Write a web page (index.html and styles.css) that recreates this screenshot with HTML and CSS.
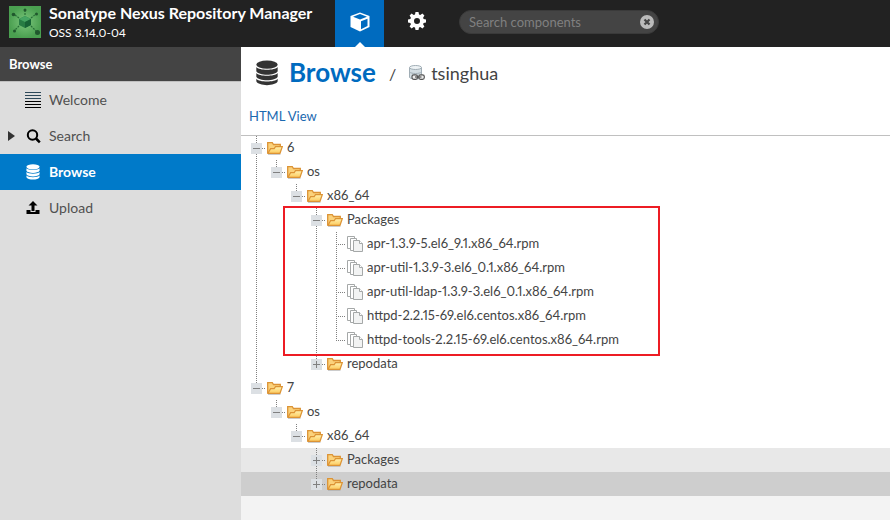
FILE: index.html
```
<!DOCTYPE html>
<html lang="en">
<head>
<meta charset="utf-8">
<title>Browse - Sonatype Nexus Repository Manager</title>
<link rel="stylesheet" href="styles.css">
</head>
<body>
<svg class="defs" aria-hidden="true">
  <defs>
    <linearGradient id="gold" x1="0" y1="0" x2="0" y2="1"><stop offset="0" stop-color="#fff3b0"/><stop offset="1" stop-color="#fdc95c"/></linearGradient>
    <radialGradient id="green"><stop offset="0" stop-color="#7cc67c"/><stop offset="1" stop-color="#4a9f50"/></radialGradient>
    <symbol id="folder" viewBox="0 0 16 16">
      <path d="M1 14.5h12.5" stroke="#aaa" stroke-opacity=".6"/>
      <path d="M.7 13V2.7h4.6l1.2 1.8h6.8v2.3" fill="#fbd27b" stroke="#dc9335" stroke-width="1.3"/>
      <path d="M1 13.3 3.6 8.6h3.6l1.3-1.9h6.8L13 13.3z" fill="url(#gold)" stroke="#dc9335" stroke-width="1.2"/>
    </symbol>
    <symbol id="files" viewBox="0 0 16 16">
      <path d="M.5 12.5V.5h7v2M3.5 14.5v-12M.5 12.5h3M3.5 2.5h6v2M3.5 14.5h3" fill="none" stroke="#a5a8a8"/>
      <path d="M6.5 4.5h6l3 3v8h-9z" fill="#f2f3f3" stroke="#a5a8a8"/>
      <path d="M12.5 4.5v3h3" fill="#fff" stroke="#a5a8a8"/>
    </symbol>
    <symbol id="database" viewBox="0 0 24 28">
      <ellipse cx="12" cy="5" rx="11.5" ry="4.5"/>
      <path d="M.5 7.5c3 4 20 4 23 0V12c-2 5-21 5-23 0z"/>
      <path d="M.5 14c3 4 20 4 23 0v4c-2 5-21 5-23 0z"/>
      <path d="M.5 20.200c3 4 20 4 23 0V23c-2 5.500-21 5.500-23 0z"/>
    </symbol>
  </defs>
</svg>

<header class="topbar">
  <svg class="logo" viewBox="0 0 32 32" aria-hidden="true">
    <rect width="32" height="32" fill="url(#green)"/>
    <path d="m16 10 6 3v6l-6 3-6-3v-6z" fill="#277c43"/>
    <path d="m16 10 6 3-6 3-6-3z" fill="#46a562"/>
    <path d="M16 16v6l6-3v-6z" fill="#176335"/>
    <path d="M16 9V5M10 12 6 9M22 12l5-4M10 20l-4 4M22 20l6 6" stroke="#286e37" stroke-width="1.200" stroke-dasharray="2 1"/>
    <g fill="#20572d"><circle cx="16" cy="4" r="1.500"/><circle cx="4.500" cy="8.500" r="1.800"/><circle cx="27.500" cy="8" r="1.500"/><circle cx="5.500" cy="25" r="1.500"/><circle cx="28.500" cy="26.500" r="2.500"/></g>
  </svg>
  <div class="product"><strong>Sonatype Nexus Repository Manager</strong><span>OSS 3.14.0-04</span></div>
  <button class="mode active" type="button" aria-label="Browse mode">
    <svg width="20" height="20" viewBox="0 0 20 20"><path d="m10 .5 9.500 3.500v11L10 19.500.5 15V4z" fill="#fff"/><path d="m3 4.700 7-2.600 7 2.600-7 2.700zM11 9.300l6.500-2.600v7.200L11 17.200z" fill="#006bbf"/></svg>
  </button>
  <button class="mode" type="button" aria-label="Administration">
    <svg width="18" height="18" viewBox="0 0 18 18"><path fill="#fff" fill-rule="evenodd" d="M7.500 0h3l.5 2.400 1.300.5 2.100-1.300 2 2-1.300 2.100.5 1.300 2.400.5v3l-2.400.5-.5 1.300 1.300 2.100-2 2-2.100-1.300-1.300.5-.5 2.400h-3L7 15.600l-1.300-.5-2.100 1.300-2-2 1.300-2.100-.5-1.300L0 10.500v-3L2.400 7l.5-1.300-1.300-2.100 2-2 2.100 1.300L7 2.400zM9 6a3 3 0 1 0 0 6 3 3 0 0 0 0-6z"/></svg>
  </button>
  <div class="search">
    <input type="text" aria-label="Search components" placeholder="Search components">
    <button type="button" aria-label="Clear search"><svg width="14" height="14" viewBox="0 0 14 14"><circle cx="7" cy="7" r="7" fill="#bbb"/><path d="m4.500 4.500 5 5m0-5-5 5" stroke="#444" stroke-width="2.200"/></svg></button>
  </div>
</header>

<div class="layout">
  <nav class="sidebar">
    <h2>Browse</h2>
    <a href="#welcome"><svg class="nav-icon" viewBox="0 0 16 16"><path d="M0 .5h16M0 3.500h16M0 6.500h16" stroke="#2d4858"/><path d="M0 9.500h16M0 12.500h16M0 15.500h16" stroke="#000"/></svg><span>Welcome</span></a>
    <a href="#search"><svg class="caret" viewBox="0 0 7 10"><path d="m0 0 7 5-7 5z" fill="#333"/></svg><svg class="nav-icon" viewBox="0 0 16 16"><circle cx="7.500" cy="7" r="4.700" fill="none" stroke="#000" stroke-width="2"/><path d="m11 10.500 3.800 3.800" stroke="#000" stroke-width="2.500"/></svg><span>Search</span></a>
    <a href="#browse" class="current" aria-current="page"><svg class="nav-icon" fill="#fff"><use href="#database"/></svg><span>Browse</span></a>
    <a href="#upload"><svg class="nav-icon" viewBox="0 0 16 16"><path d="M8 1 3.500 5.500h3V11h3V5.500h3zM1.500 10h4v2h5v-2h4v4h-13z"/></svg><span>Upload</span></a>
  </nav>

  <main>
    <div class="heading">
      <svg class="db" fill="#333"><use href="#database"/></svg>
      <h1>Browse</h1>
      <span class="slash">/</span>
      <svg class="proxy" viewBox="0 0 16 16">
        <path d="M.5 2.500v10c2 2 10 2 12 0v-10" fill="#d3dde2" stroke="#a0adb5"/>
        <ellipse cx="6.500" cy="2.500" rx="6" ry="2" fill="#eef3f5" stroke="#a0adb5"/>
        <path d="M.5 7c2 2 10 2 12 0" fill="none" stroke="#a0adb5"/>
        <g fill="#eee" stroke="#555" stroke-width="1.200"><rect x="3" y="9.800" width="5.500" height="4.500" rx="1.800"/><rect x="9.800" y="9.800" width="5.500" height="4.500" rx="1.800"/><path d="M6 12h6.500"/></g>
      </svg>
      <span class="repo">tsinghua</span>
    </div>
    <div class="toolbar"><a href="#html">HTML View</a></div>

    <ul class="tree">
      <li class="row"><i class="tee"><b></b></i><svg><use href="#folder"/></svg><span>6</span></li>
      <li class="row"><i class="line"></i><i class="end"><b></b></i><svg><use href="#folder"/></svg><span>os</span></li>
      <li class="row"><i class="line"></i><i></i><i class="end"><b></b></i><svg><use href="#folder"/></svg><span>x86_64</span></li>
      <li class="marked">
        <ul>
          <li class="row"><i class="line"></i><i></i><i></i><i class="tee"><b></b></i><svg><use href="#folder"/></svg><span>Packages</span></li>
          <li class="row"><i class="line"></i><i></i><i></i><i class="line"></i><i class="tee"></i><svg><use href="#files"/></svg><span>apr-1.3.9-5.el6_9.1.x86_64.rpm</span></li>
          <li class="row"><i class="line"></i><i></i><i></i><i class="line"></i><i class="tee"></i><svg><use href="#files"/></svg><span>apr-util-1.3.9-3.el6_0.1.x86_64.rpm</span></li>
          <li class="row"><i class="line"></i><i></i><i></i><i class="line"></i><i class="tee"></i><svg><use href="#files"/></svg><span>apr-util-ldap-1.3.9-3.el6_0.1.x86_64.rpm</span></li>
          <li class="row"><i class="line"></i><i></i><i></i><i class="line"></i><i class="tee"></i><svg><use href="#files"/></svg><span>httpd-2.2.15-69.el6.centos.x86_64.rpm</span></li>
          <li class="row"><i class="line"></i><i></i><i></i><i class="line"></i><i class="end"></i><svg><use href="#files"/></svg><span>httpd-tools-2.2.15-69.el6.centos.x86_64.rpm</span></li>
        </ul>
      </li>
      <li class="row"><i class="line"></i><i></i><i></i><i class="end"><b class="plus"></b></i><svg><use href="#folder"/></svg><span>repodata</span></li>
      <li class="row"><i class="end"><b></b></i><svg><use href="#folder"/></svg><span>7</span></li>
      <li class="row"><i></i><i class="end"><b></b></i><svg><use href="#folder"/></svg><span>os</span></li>
      <li class="row"><i></i><i></i><i class="end"><b></b></i><svg><use href="#folder"/></svg><span>x86_64</span></li>
      <li class="row hover"><i></i><i></i><i></i><i class="tee"><b class="plus"></b></i><svg><use href="#folder"/></svg><span>Packages</span></li>
      <li class="row selected"><i></i><i></i><i></i><i class="end"><b class="plus"></b></i><svg><use href="#folder"/></svg><span>repodata</span></li>
    </ul>
  </main>
</div>
</body>
</html>
```
FILE: styles.css
```
*, *::after { box-sizing: border-box; }
body {
  margin: 0;
  min-height: 100vh;
  display: flex;
  flex-direction: column;
  font-family: Lato, "Open Sans", sans-serif;
  font-size: 13px;
  font-variant-numeric: proportional-nums;
  color: #444;
}
a { text-decoration: none; }
button { border: 0; padding: 0; background: none; }
ul { margin: 0; padding: 0; list-style: none; }
.defs { position: absolute; width: 0; height: 0; }

.topbar {
  display: flex;
  height: 47px;
  background: #222;
  color: #fff;
}
.logo { width: 32px; height: 32px; margin: 6px 8px 0 9px; flex: none; }
.product { width: 286px; padding-top: 3px; flex: none; white-space: nowrap; }
.product strong { display: block; font-size: 16px; line-height: 20px; }
.product span { display: block; font-size: 12px; line-height: 20px; }
.mode {
  position: relative;
  width: 49px;
  height: 47px;
  padding-bottom: 4px;
  display: flex;
  align-items: center;
  justify-content: center;
  flex: none;
}
.mode + .mode { width: 66px; padding-bottom: 6px; }
.mode.active { background: #006bbf; }
.mode.active::after {
  content: "";
  position: absolute;
  bottom: 0;
  left: 50%;
  margin-left: -5px;
  border: 5px solid transparent;
  border-top: 0;
  border-bottom-color: #fff;
}
.search {
  display: flex;
  align-items: center;
  width: 200px;
  height: 24px;
  margin: 10px 0 0 9px;
  padding: 0 4px 0 9px;
  border: 1px solid #3a3a3a;
  border-radius: 12px;
  background: #444;
}
.search input {
  flex: 1;
  min-width: 0;
  padding: 0;
  border: 0;
  outline: 0;
  background: none;
  font: inherit;
  color: #fff;
}
.search input::placeholder { color: #808080; }
.search button, .search button svg { display: block; }

.layout { display: flex; flex: 1; }
.sidebar { width: 241px; flex: none; background: #ddd; }
.sidebar h2 {
  height: 35px;
  margin: 0;
  padding-left: 9px;
  border-bottom: 1px solid #c0c0c0;
  background: #444;
  color: #fff;
  font-size: 13px;
  line-height: 34px;
}
.sidebar a {
  position: relative;
  display: flex;
  align-items: center;
  gap: 8px;
  height: 36px;
  padding-left: 25px;
  color: #505050;
  font-size: 14px;
}
.sidebar .current { background: #007ac9; color: #fff; font-weight: bold; }
.sidebar span, .row span { padding-bottom: 2px; }
.nav-icon { width: 16px; height: 16px; }
.caret { position: absolute; left: 8px; width: 7px; height: 10px; }

main { flex: 1; min-width: 0; background: #f3f3f3; }
.heading {
  display: flex;
  align-items: center;
  height: 52px;
  padding-left: 14px;
  background: #fff;
}
.db { width: 24px; height: 26px; margin-right: 10px; }
h1 { margin: 0; padding-bottom: 2px; font-size: 26px; line-height: 32px; color: #006bbf; }
.slash { margin: 0 13px; font-size: 16px; }
.proxy { width: 16px; height: 16px; margin-right: 6px; }
.repo { font-size: 18px; color: #444; }
.toolbar {
  height: 37px;
  padding-left: 8px;
  border-bottom: 1px solid #c0c0c0;
  background: #fff;
  line-height: 35px;
}
.toolbar a { color: #1b69b0; }

.row {
  display: flex;
  align-items: center;
  height: 24px;
  padding-left: 5px;
  background: #fff;
  white-space: nowrap;
}
.row.hover { background: #e8e8e8; }
.row.selected { background: #cecece; }
.row > svg { width: 16px; height: 16px; margin: 0 4px 0 1px; flex: none; }
.row i {
  --v: repeating-linear-gradient(to bottom, #808080 0 1px, transparent 1px 2px);
  --h: repeating-linear-gradient(to right, #808080 0 1px, transparent 1px 2px);
  display: flex;
  align-items: center;
  justify-content: center;
  width: 20px;
  height: 24px;
  flex: none;
  background-repeat: no-repeat;
}
.row .line { background-image: var(--v); background-size: 1px 24px; background-position: 10px 0; }
.row .tee { background-image: var(--v), var(--h); background-size: 1px 24px, 10px 1px; background-position: 10px 0, 10px 12px; }
.row .end { background-image: var(--v), var(--h); background-size: 1px 12px, 10px 1px; background-position: 10px 0, 10px 12px; }
.row b {
  width: 11px;
  height: 11px;
  margin: 1px 0 0 1px;
  background: linear-gradient(#808080, #808080) center / 7px 1px no-repeat #dce0e4;
}
.row .plus {
  background: linear-gradient(#808080, #808080) center / 7px 1px no-repeat, linear-gradient(#808080, #808080) center / 1px 7px no-repeat #dce0e4;
}
.marked { position: relative; }
.marked::after {
  content: "";
  position: absolute;
  top: -2px;
  bottom: -4px;
  left: 42px;
  width: 377px;
  border: 2px solid #ed1c24;
  pointer-events: none;
}
```
